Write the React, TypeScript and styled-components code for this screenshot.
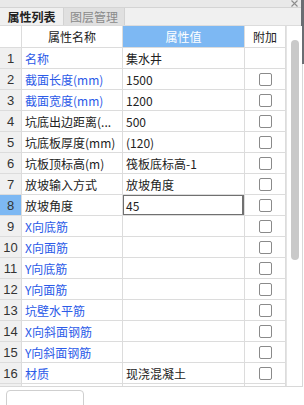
import React from "react";
import styled, { createGlobalStyle } from "styled-components";

const Global = createGlobalStyle`
  html, body { margin: 0; padding: 0; background: #ffffff; }
  body { font-family: "Microsoft YaHei", "Noto Sans CJK SC", "Noto Sans", sans-serif; }
`;

const Panel = styled.div`
  position: relative;
  width: 304px;
  height: 405px;
  overflow: hidden;
  background: #ffffff;
  display: flex;
  flex-direction: column;
`;

const TitleStrip = styled.div`
  height: 11px;
  background: #e9e9e9;
  border-bottom: 1px solid #d4d4d4;
  display: flex;
  justify-content: flex-end;
  align-items: center;
  padding-right: 6px;
`;

const Close = styled.svg`
  width: 7px;
  height: 7px;
  display: block;
`;

const EdgeShade = styled.div`
  position: absolute;
  right: 0;
  top: 0;
  width: 3px;
  height: 64px;
  background: #6a6d72;
`;

const TabStrip = styled.div`
  height: 21px;
  background: #f0f0f0;
  display: flex;
  border-bottom: 1px solid #dcdcdc;
`;

const Tab = styled.div<{ $active?: boolean }>`
  width: ${(p) => (p.$active ? 63 : 62)}px;
  display: flex;
  align-items: center;
  justify-content: center;
  font-size: 12px;
  font-weight: ${(p) => (p.$active ? 700 : 400)};
  color: ${(p) => (p.$active ? "#222222" : "#8a8a8a")};
  background: ${(p) => (p.$active ? "#f0f0f0" : "#e0e0e0")};
  border-left: ${(p) => (p.$active ? "none" : "1px solid #d2d2d2")};
  border-right: ${(p) => (p.$active ? "none" : "1px solid #d2d2d2")};
  box-sizing: border-box;
`;

const Body = styled.div`
  display: flex;
  height: 360px;
  border-bottom: 1px solid #d8d8d8;
  border-right: 1px solid #d8d8d8;
  width: 302px;
  box-sizing: content-box;
`;

const Grid = styled.div`
  width: 286px;
  height: 360px;
  overflow: hidden;
  display: flex;
  flex-direction: column;
`;

const Row = styled.div<{ $h: number }>`
  display: flex;
  height: ${(p) => p.$h}px;
  flex-shrink: 0;
  border-bottom: 1px solid #dcdcdc;
`;

const Cell = styled.div<{ $w: number; $bg?: string; $align?: string; $color?: string }>`
  width: ${(p) => p.$w}px;
  flex-shrink: 0;
  box-sizing: border-box;
  border-right: 1px solid #dcdcdc;
  background: ${(p) => p.$bg || "#ffffff"};
  color: ${(p) => p.$color || "#222222"};
  font-size: 12px;
  display: flex;
  align-items: center;
  justify-content: ${(p) => p.$align || "flex-start"};
  padding: 0 3px;
  white-space: nowrap;
  overflow: hidden;
  position: relative;
`;

const NumCell = styled(Cell)`
  font-family: "Liberation Sans", Arial, sans-serif;
  font-size: 13px;
  color: #333333;
  padding: 0;
`;

const Ellip = styled.span`
  overflow: hidden;
  text-overflow: ellipsis;
  white-space: nowrap;
  display: block;
  max-width: 100%;
`;

const SelBox = styled.div`
  position: absolute;
  inset: -1px 0 -1px -1px;
  border: 2px solid #707070;
  pointer-events: none;
`;

const Check = styled.div`
  width: 13px;
  height: 13px;
  box-sizing: border-box;
  border: 1px solid #8a8a8a;
  border-radius: 2px;
  background: #ffffff;
`;

const ScrollCol = styled.div`
  width: 15px;
  border-left: 1px solid #e4e4e4;
  background: #ffffff;
  position: relative;
`;

const Thumb = styled.div`
  position: absolute;
  left: 4px;
  top: 14px;
  width: 8px;
  height: 220px;
  border-radius: 4px;
  background: #c9c9c9;
`;

const Footer = styled.div`
  flex: 1;
  padding: 3px 0 0 6px;
`;

const FootBtn = styled.div`
  width: 78px;
  height: 20px;
  border: 1px solid #cfcfcf;
  border-radius: 4px;
  box-sizing: border-box;
`;

const W = [22, 101, 122, 41];
const BLUE = "#2b5ae8";

type Item = { name: string; value: string; blue: boolean; check: boolean; trunc?: boolean };

const items: Item[] = [
  { name: "名称", value: "集水井", blue: true, check: false },
  { name: "截面长度(mm)", value: "1500", blue: true, check: true },
  { name: "截面宽度(mm)", value: "1200", blue: true, check: true },
  { name: "坑底出边距离(mm)", value: "500", blue: false, check: true, trunc: true },
  { name: "坑底板厚度(mm)", value: "(120)", blue: false, check: true },
  { name: "坑板顶标高(m)", value: "筏板底标高-1", blue: false, check: true },
  { name: "放坡输入方式", value: "放坡角度", blue: false, check: true },
  { name: "放坡角度", value: "45", blue: false, check: true },
  { name: "X向底筋", value: "", blue: true, check: true },
  { name: "X向面筋", value: "", blue: true, check: true },
  { name: "Y向底筋", value: "", blue: true, check: true },
  { name: "Y向面筋", value: "", blue: true, check: true },
  { name: "坑壁水平筋", value: "", blue: true, check: true },
  { name: "X向斜面钢筋", value: "", blue: true, check: true },
  { name: "Y向斜面钢筋", value: "", blue: true, check: true },
  { name: "材质", value: "现浇混凝土", blue: true, check: true },
  { name: "", value: "", blue: false, check: false },
];

export default function App() {
  return (
    <>
      <Global />
      <Panel>
        <TitleStrip>
          <Close viewBox="0 0 7 7">
            <path d="M0.5 0.5 L6.5 6.5 M6.5 0.5 L0.5 6.5" stroke="#8c8c8c" strokeWidth="1.1" />
          </Close>
        </TitleStrip>
        <EdgeShade />
        <TabStrip>
          <Tab $active>属性列表</Tab>
          <Tab>图层管理</Tab>
        </TabStrip>
        <Body>
          <Grid>
            <Row $h={21}>
              <Cell $w={W[0]} />
              <Cell $w={W[1]} $align="center">属性名称</Cell>
              <Cell $w={W[2]} $align="center" $bg="#7db8f3" $color="#ffffff">
                属性值
              </Cell>
              <Cell $w={W[3]} $align="center">附加</Cell>
            </Row>
            {items.map((it, i) => (
              <Row $h={20} key={i}>
                <NumCell $w={W[0]} $align="center" $bg={i === 7 ? "#7db8f3" : "#f0f0f0"}>
                  {i < 16 ? i + 1 : ""}
                </NumCell>
                <Cell $w={W[1]} $color={it.blue ? BLUE : "#222222"}>
                  {it.trunc ? <Ellip>{"坑底出边距离(..."}</Ellip> : it.name}
                </Cell>
                <Cell $w={W[2]}>
                  {it.value}
                  {i === 7 && <SelBox />}
                </Cell>
                <Cell $w={W[3]} $align="center">
                  {it.check && <Check />}
                </Cell>
              </Row>
            ))}
          </Grid>
          <ScrollCol>
            <Thumb />
          </ScrollCol>
        </Body>
        <Footer>
          <FootBtn />
        </Footer>
      </Panel>
    </>
  );
}
